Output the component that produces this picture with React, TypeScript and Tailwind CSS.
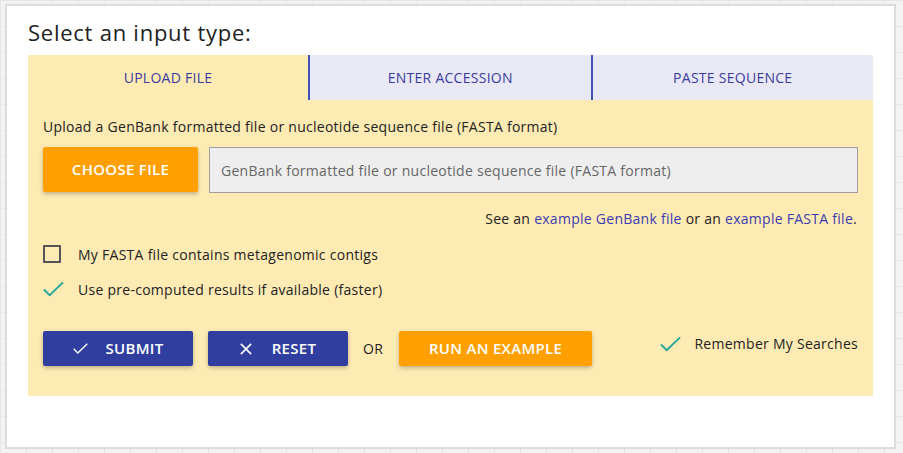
import React from 'react';

const font = { fontFamily: '"Open Sans", "DejaVu Sans", sans-serif' };

const Check = ({ className }: { className?: string }) => (
  <svg viewBox="0 0 22 16" className={className} fill="none" stroke="currentColor" strokeWidth={2}>
    <path d="M1 8.5 L7 14.5 L21 1" />
  </svg>
);

const Cross = ({ className }: { className?: string }) => (
  <svg viewBox="0 0 14 14" className={className} fill="none" stroke="currentColor" strokeWidth={1.8}>
    <path d="M1 1 L13 13 M13 1 L1 13" />
  </svg>
);

const tabs = ['UPLOAD FILE', 'ENTER ACCESSION', 'PASTE SEQUENCE'];

export default function App() {
  return (
    <div
      className="w-[903px] h-[453px] bg-[#f3f3f3] bg-[linear-gradient(#e6e6e6_1px,transparent_1px),linear-gradient(90deg,#e6e6e6_1px,transparent_1px)] bg-[size:26px_26px] pt-[4px] pl-[5px]"
      style={font}
    >
      <div className="w-[891px] h-[445px] bg-white border-2 border-[#dcdcdc] pl-[21px] pt-[12px]">
        <h1 className="text-[22px] leading-[28px] text-[#222] tracking-[0.75px]">Select an input type:</h1>

        <div className="w-[845px] mt-[9px] tracking-[0.27px]">
          <div className="flex h-[45px] rounded-tr-[3px] overflow-hidden">
            {tabs.map((t, i) => (
              <div
                key={t}
                className={
                  'flex items-center justify-center text-[14px] text-[#3b3b9e] ' +
                  (i === 0 ? 'w-[280px] bg-[#feebb4]' : 'flex-1 bg-[#e8e9f5] border-l-2 border-[#3f51b5]')
                }
              >
                {t}
              </div>
            ))}
          </div>

          <div className="bg-[#feebb4] h-[296px] px-[15px] pt-[17px]">
            <p className="text-[14px] leading-[20px] text-[#222]">
              Upload a GenBank formatted file or nucleotide sequence file (FASTA format)
            </p>

            <div className="flex gap-[11px] mt-[10px]">
              <button className="w-[155px] h-[45px] bg-[#ffa000] text-white font-semibold text-[15px] tracking-[0.3px] rounded-[2px] shadow-[0_2px_4px_rgba(0,0,0,0.25)]">
                CHOOSE FILE
              </button>
              <div className="flex-1 h-[46px] bg-[#eeeeee] border border-[#9e9e9e] flex items-center px-[11px] text-[14px] text-[#666]">
                GenBank formatted file or nucleotide sequence file (FASTA format)
              </div>
            </div>

            <p className="text-right text-[14px] leading-[20px] text-[#222] mt-[16px] pr-[1px]">
              See an <span className="text-[#3b3bb0]">example GenBank file</span> or an{' '}
              <span className="text-[#3b3bb0]">example FASTA file</span>.
            </p>

            <div className="flex items-center mt-[15px] h-[20px]">
              <div className="w-[18px] h-[18px] border-2 border-[#555] rounded-[1px]" />
              <span className="ml-[17px] text-[14px] text-[#222]">My FASTA file contains metagenomic contigs</span>
            </div>

            <div className="flex items-center mt-[15px] h-[20px]">
              <Check className="w-[21px] h-[16px] text-[#26a69a]" />
              <span className="ml-[14px] text-[14px] text-[#222]">Use pre-computed results if available (faster)</span>
            </div>

            <div className="flex items-center mt-[32px]">
              <button className="w-[150px] h-[35px] bg-[#303f9f] text-white font-semibold text-[15px] tracking-[0.3px] rounded-[2px] shadow-[0_2px_4px_rgba(0,0,0,0.25)] flex items-center justify-center gap-[18px]">
                <Check className="w-[15px] h-[11px]" />
                SUBMIT
              </button>
              <button className="ml-[15px] w-[140px] h-[35px] bg-[#303f9f] text-white font-semibold text-[15px] tracking-[0.3px] rounded-[2px] shadow-[0_2px_4px_rgba(0,0,0,0.25)] flex items-center justify-center gap-[20px]">
                <Cross className="w-[12px] h-[12px]" />
                RESET
              </button>
              <span className="ml-[15px] text-[14px] text-[#222]">OR</span>
              <button className="ml-[16px] w-[193px] h-[35px] bg-[#ffa000] text-white font-semibold text-[15px] tracking-[0.3px] rounded-[2px] shadow-[0_2px_4px_rgba(0,0,0,0.25)]">
                RUN AN EXAMPLE
              </button>
              <div className="ml-auto flex items-center -mt-[10px]">
                <Check className="w-[21px] h-[16px] text-[#26a69a]" />
                <span className="ml-[13px] text-[14px] text-[#222]">Remember My Searches</span>
              </div>
            </div>
          </div>
        </div>
      </div>
    </div>
  );
}
